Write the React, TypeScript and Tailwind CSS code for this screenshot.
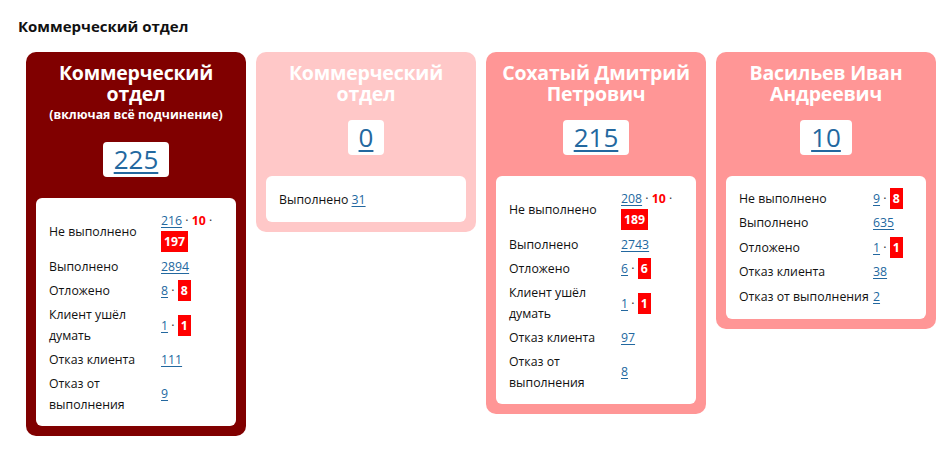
import React from "react";

type Part =
  | { t: "link"; v: string }
  | { t: "red"; v: string }
  | { t: "badge"; v: string }
  | { t: "sep" };

type Row = { label: React.ReactNode; parts: Part[]; tall?: boolean };

const Link = ({ v }: { v: string }) => (
  <a href="#" className="text-[#23689f] underline underline-offset-2">
    {v}
  </a>
);

const Value = ({ parts }: { parts: Part[] }) => (
  <>
    {parts.map((p, i) => {
      if (p.t === "link") return <Link key={i} v={p.v} />;
      if (p.t === "red")
        return (
          <span key={i} className="font-bold text-[#ff0000]">
            {p.v}
          </span>
        );
      if (p.t === "badge")
        return (
          <span
            key={i}
            className="bg-[#ff0000] px-[3px] py-[2px] font-bold text-white box-decoration-clone"
          >
            {p.v}
          </span>
        );
      return (
        <span key={i} className="text-[#333]">
          {" · "}
        </span>
      );
    })}
  </>
);

const L = (v: string): Part => ({ t: "link", v });
const R = (v: string): Part => ({ t: "red", v });
const B = (v: string): Part => ({ t: "badge", v });
const S: Part = { t: "sep" };

const Table = ({ rows, labelW, nowrap }: { rows: Row[]; labelW: string; nowrap?: boolean }) => (
  <div className="flex flex-col">
    {rows.map((r, i) => (
      <div
        key={i}
        className={`flex items-center py-[1px] ${r.tall ? "min-h-[46px]" : "min-h-[24.5px]"}`}
      >
        <div className={`${labelW} shrink-0 pr-[4px] ${nowrap ? "whitespace-nowrap" : ""}`}>{r.label}</div>
        <div className="min-w-0 flex-1">
          <Value parts={r.parts} />
        </div>
      </div>
    ))}
  </div>
);

const Card = ({
  bg,
  title,
  subtitle,
  num,
  children,
}: {
  bg: string;
  title: React.ReactNode;
  subtitle?: string;
  num: string;
  children: React.ReactNode;
}) => (
  <div className={`${bg} flex w-[220px] shrink-0 flex-col rounded-[10px] p-[10px]`}>
    <div className="text-center text-[19.5px] font-bold leading-[21px] text-white tracking-[-0.2px]">
      {title}
    </div>
    {subtitle && (
      <div className="text-center text-[12.3px] font-bold leading-[22px] text-white">
        {subtitle}
      </div>
    )}
    <div className="mt-[16px] flex justify-center">
      <div className="rounded-[4px] bg-white px-[11px] py-[2px] text-[26px] leading-[31px]">
        <a href="#" className="text-[#23689f] underline underline-offset-[3px] decoration-2">
          {num}
        </a>
      </div>
    </div>
    <div className="mt-[21px] rounded-[6px] bg-white px-[13px] py-[10px] text-[12.3px] leading-[21px] text-[#111]">
      {children}
    </div>
  </div>
);

export default function App() {
  const rows1: Row[] = [
    { label: "Не выполнено", parts: [L("216"), S, R("10"), S, B("197")], tall: true },
    { label: "Выполнено", parts: [L("2894")] },
    { label: "Отложено", parts: [L("8"), S, B("8")] },
    { label: <>Клиент ушёл думать</>, parts: [L("1"), S, B("1")] },
    { label: "Отказ клиента", parts: [L("111")] },
    { label: "Отказ от выполнения", parts: [L("9")] },
  ];
  const rows3: Row[] = [
    { label: "Не выполнено", parts: [L("208"), S, R("10"), S, B("189")], tall: true },
    { label: "Выполнено", parts: [L("2743")] },
    { label: "Отложено", parts: [L("6"), S, B("6")] },
    { label: "Клиент ушёл думать", parts: [L("1"), S, B("1")] },
    { label: "Отказ клиента", parts: [L("97")] },
    { label: "Отказ от выполнения", parts: [L("8")] },
  ];
  const rows4: Row[] = [
    { label: "Не выполнено", parts: [L("9"), S, B("8")] },
    { label: "Выполнено", parts: [L("635")] },
    { label: "Отложено", parts: [L("1"), S, B("1")] },
    { label: "Отказ клиента", parts: [L("38")] },
    { label: "Отказ от выполнения", parts: [L("2")] },
  ];

  return (
    <div
      className="min-h-[454px] overflow-hidden bg-white pl-[18px] pt-[16px] text-[#111]"
      style={{ fontFamily: '"Open Sans", "Noto Sans", sans-serif' }}
    >
      <div className="text-[15px] font-bold leading-[20px]">Коммерческий отдел</div>
      <div className="ml-[8px] mt-[16px] flex items-start gap-[10px]">
        <Card
          bg="bg-[#800000]"
          title={
            <>
              Коммерческий
              <br />
              отдел
            </>
          }
          subtitle="(включая всё подчинение)"
          num="225"
        >
          <Table rows={rows1} labelW="w-[112px]" />
        </Card>
        <Card
          bg="bg-[#ffc8c8]"
          title={
            <>
              Коммерческий
              <br />
              отдел
            </>
          }
          num="0"
        >
          <div className="flex min-h-[26px] items-center">
            <span>
              Выполнено <Link v="31" />
            </span>
          </div>
        </Card>
        <Card
          bg="bg-[#ff9696]"
          title={
            <>
              Сохатый Дмитрий
              <br />
              Петрович
            </>
          }
          num="215"
        >
          <Table rows={rows3} labelW="w-[112px]" />
        </Card>
        <Card
          bg="bg-[#ff9696]"
          title={
            <>
              Васильев Иван
              <br />
              Андреевич
            </>
          }
          num="10"
        >
          <Table rows={rows4} labelW="w-[134px]" nowrap />
        </Card>
      </div>
    </div>
  );
}
